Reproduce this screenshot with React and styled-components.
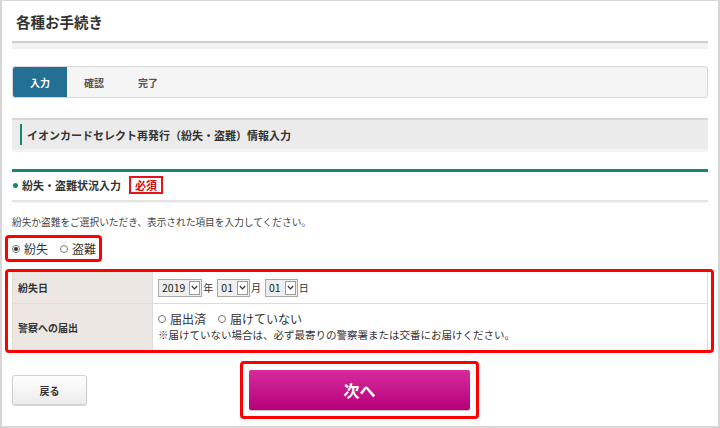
import React from "react";
import styled, { createGlobalStyle } from "styled-components";

const Global = createGlobalStyle`
  html, body { margin: 0; padding: 0; background: #fff; }
  body { font-family: "Noto Sans CJK JP", "Noto Sans", sans-serif; color: #333; }
  * { box-sizing: border-box; }
`;

const Frame = styled.div`
  width: 720px;
  height: 428px;
  border: 2px solid #d6d6d6;
  border-top-width: 1px;
  padding: 0 10px;
  overflow: hidden;
`;

const Title = styled.h1`
  margin: 0;
  height: 40px;
  padding: 2px 0 0 4px;
  line-height: 38px;
  font-size: 14.5px;
  font-weight: 700;
  color: #333;
`;

const Rule = styled.div`
  height: 8px;
  border-top: 2px solid #cfcfcf;
  background: #f2f2f2;
`;

const TabBar = styled.div`
  margin-top: 17px;
  height: 32px;
  display: flex;
  border: 1px solid #d8d8d8;
  border-radius: 3px;
  background: #f5f5f5;
  overflow: hidden;
`;

const Tab = styled.div`
  width: 54px;
  display: flex;
  align-items: center;
  justify-content: center;
  font-size: 10px;
  font-weight: 700;
  color: ${(p) => (p.$active ? "#fff" : "#555")};
  background: ${(p) => (p.$active ? "#246f94" : "transparent")};
`;

const SectionHead = styled.div`
  margin-top: 20px;
  height: 34px;
  border-top: 2px solid #d6d6d6;
  border-bottom: 3px solid #f3f3f3;
  background: #ebebeb;
  display: flex;
  align-items: center;
  padding-left: 8px;
  gap: 5px;
`;

const GreenBar = styled.span`
  width: 2px;
  height: 21px;
  background: #13886c;
`;

const SectionTitle = styled.span`
  font-size: 11px;
  font-weight: 700;
  color: #333;
`;

const GreenLine = styled.div`
  margin-top: 17px;
  height: 3px;
  background: #13886c;
`;

const SubHead = styled.div`
  height: 30px;
  border-bottom: 2px solid #e4e4e4;
  box-shadow: 0 1px 0 #f4f4f4;
  display: flex;
  align-items: center;
  padding-bottom: 2px;
`;

const Dot = styled.span`
  width: 5px;
  height: 5px;
  border-radius: 50%;
  background: #13886c;
  margin: 0 4px 0 1px;
`;

const SubTitle = styled.span`
  font-size: 11px;
  font-weight: 700;
  color: #333;
`;

const Required = styled.span`
  margin-left: 8px;
  width: 34px;
  height: 18px;
  border: 2px solid #e0141a;
  display: flex;
  align-items: center;
  justify-content: center;
  font-size: 11px;
  font-weight: 700;
  color: #d4101a;
`;

const Desc = styled.p`
  margin: 13px 0 0;
  font-size: 9.7px;
  line-height: 14px;
  color: #444;
`;

const Highlight = styled.div`
  border: 3px solid #ff0000;
  border-radius: 4px;
`;

const RadioBox = styled(Highlight)`
  margin: 6px 0 0 -7px;
  width: 97px;
  height: 27px;
  display: flex;
  align-items: center;
  padding-left: 4px;
  gap: 12px;
`;

const Radio = styled.label`
  display: inline-flex;
  align-items: center;
  gap: 4px;
  font-size: 12px;
  color: #333;
  line-height: 16px;
`;

const Circle = styled.span`
  width: 8px;
  height: 8px;
  border-radius: 50%;
  border: 1px solid #777;
  background: #fff;
  display: inline-flex;
  align-items: center;
  justify-content: center;
  &::after {
    content: "";
    width: 4px;
    height: 4px;
    border-radius: 50%;
    background: ${(p) => (p.$checked ? "#333" : "transparent")};
  }
`;

const TableBox = styled(Highlight)`
  margin: 7px -6px 0 -7px;
  padding: 0 3px 0 4px;
`;

const Table = styled.div`
  display: grid;
  grid-template-columns: 140px 1fr;
  border-left: 1px solid #e0ddd9;
  border-right: 1px solid #dcdcdc;
`;

const Label = styled.div`
  background: #ece7e2;
  border-right: 1px solid #dcdcdc;
  border-top: ${(p) => (p.$first ? "none" : "1px solid #dcdcdc")};
  height: ${(p) => p.$h}px;
  display: flex;
  align-items: center;
  padding-left: 5px;
  font-size: 10px;
  font-weight: 700;
  color: #333;
`;

const Cell = styled.div`
  border-top: ${(p) => (p.$first ? "none" : "1px solid #dcdcdc")};
  height: ${(p) => p.$h}px;
  padding: ${(p) => (p.$stack ? "7px 5px 0" : "0 5px")};
  display: flex;
  flex-direction: ${(p) => (p.$stack ? "column" : "row")};
  align-items: ${(p) => (p.$stack ? "flex-start" : "center")};
`;

const Unit = styled.span`
  font-size: 10px;
  color: #333;
  margin: 0 4px 0 1px;
`;

const SelectBox = styled.span`
  display: inline-flex;
  align-items: center;
  height: 18px;
  border: 1px solid #a8a8a8;
  background: #efefef;
  padding-right: 1px;
`;

const SelectValue = styled.span`
  font-size: 10.5px;
  padding: 0 4px 0 3px;
  color: #222;
`;

const Arrow = styled.span`
  width: 11px;
  height: 14px;
  border: 1px solid #9c9c9c;
  background: #fff;
  display: flex;
  align-items: center;
  justify-content: center;
`;

const RadioLine = styled.div`
  display: flex;
  gap: 12px;
  height: 16px;
  align-items: center;
`;

const Note = styled.div`
  font-size: 10.5px;
  line-height: 16px;
  color: #333;
`;

const Buttons = styled.div`
  margin-top: 8px;
  display: grid;
  grid-template-columns: 1fr auto 1fr;
  align-items: center;
`;

const BackButton = styled.button`
  justify-self: start;
  width: 75px;
  height: 30px;
  border: 1px solid #cfcfcf;
  border-radius: 3px;
  background: linear-gradient(#ffffff, #ececec);
  box-shadow: 0 1px 1px rgba(0, 0, 0, 0.18);
  font-family: inherit;
  font-size: 10px;
  font-weight: 700;
  color: #333;
  padding: 0;
`;

const NextBox = styled(Highlight)`
  width: 239px;
  height: 58px;
  padding: 6px;
  margin-left: -1px;
`;

const NextButton = styled.button`
  width: 100%;
  height: 100%;
  border: none;
  border-radius: 2px;
  background: linear-gradient(#d62c9d, #b6007a);
  box-shadow: 0 1px 1px rgba(0, 0, 0, 0.25);
  font-family: inherit;
  font-size: 16px;
  font-weight: 700;
  color: #fff;
  padding: 0;
`;

const Chevron = () => (
  <svg width="7" height="5" viewBox="0 0 7 5">
    <path d="M0.8 1 L3.5 3.8 L6.2 1" fill="none" stroke="#333" strokeWidth="1.2" />
  </svg>
);

const Select = ({ value }) => (
  <SelectBox>
    <SelectValue>{value}</SelectValue>
    <Arrow>
      <Chevron />
    </Arrow>
  </SelectBox>
);

export default function App() {
  return (
    <>
      <Global />
      <Frame>
        <Title>各種お手続き</Title>
        <Rule />
        <TabBar>
          <Tab $active>入力</Tab>
          <Tab>確認</Tab>
          <Tab>完了</Tab>
        </TabBar>
        <SectionHead>
          <GreenBar />
          <SectionTitle>イオンカードセレクト再発行（紛失・盗難）情報入力</SectionTitle>
        </SectionHead>
        <GreenLine />
        <SubHead>
          <Dot />
          <SubTitle>紛失・盗難状況入力</SubTitle>
          <Required>必須</Required>
        </SubHead>
        <Desc>紛失か盗難をご選択いただき、表示された項目を入力してください。</Desc>
        <RadioBox>
          <Radio>
            <Circle $checked />
            紛失
          </Radio>
          <Radio>
            <Circle />
            盗難
          </Radio>
        </RadioBox>
        <TableBox>
          <Table>
            <Label $first $h={31}>紛失日</Label>
            <Cell $first $h={31}>
              <Select value="2019" />
              <Unit>年</Unit>
              <Select value="01" />
              <Unit>月</Unit>
              <Select value="01" />
              <Unit>日</Unit>
            </Cell>
            <Label $h={47}>警察への届出</Label>
            <Cell $h={47} $stack>
              <RadioLine>
                <Radio>
                  <Circle />
                  届出済
                </Radio>
                <Radio>
                  <Circle />
                  届けていない
                </Radio>
              </RadioLine>
              <Note>※届けていない場合は、必ず最寄りの警察署または交番にお届けください。</Note>
            </Cell>
          </Table>
        </TableBox>
        <Buttons>
          <BackButton>戻る</BackButton>
          <NextBox>
            <NextButton>次へ</NextButton>
          </NextBox>
        </Buttons>
      </Frame>
    </>
  );
}
